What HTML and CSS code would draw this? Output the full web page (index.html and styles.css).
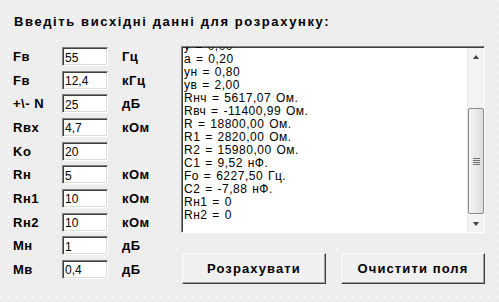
FILE: index.html
```html
<!DOCTYPE html>
<html lang="uk">
  <head>
    <meta charset="UTF-8" />
    <title>Розрахунок фільтра</title>
    <link rel="stylesheet" href="styles.css">
  </head>
  <body>
    <div class="form">
      <h1 class="title">Введіть висхідні данні для розрахунку:</h1>
      <div class="main">
        <div class="fields">
          <label>Fв</label><input class="edit" value="55" /><span>Гц</span>
          <label>Fв</label><input class="edit" value="12,4" /><span>кГц</span>
          <label>+\- N</label><input class="edit" value="25" /><span>дБ</span>
          <label>Rвх</label><input class="edit" value="4,7" /><span>кОм</span>
          <label>Ko</label><input class="edit" value="20" /><span></span>
          <label>Rн</label><input class="edit" value="5" /><span>кОм</span>
          <label>Rн1</label><input class="edit" value="10" /><span>кОм</span>
          <label>Rн2</label><input class="edit" value="10" /><span>кОм</span>
          <label>Mн</label><input class="edit" value="1" /><span>дБ</span>
          <label>Mв</label><input class="edit" value="0,4" /><span>дБ</span>
        </div>
        <div class="right">
          <div class="memo">
            <div class="lines">
              <p>y = 0,00</p>
              <p>a = 0,20</p>
              <p>ун = 0,80</p>
              <p>ув = 2,00</p>
              <p>Rнч = 5617,07 Ом.</p>
              <p>Rвч = -11400,99 Ом.</p>
              <p>R = 18800,00 Ом.</p>
              <p>R1 = 2820,00 Ом.</p>
              <p>R2 = 15980,00 Ом.</p>
              <p>C1 = 9,52 нФ.</p>
              <p>Fo = 6227,50 Гц.</p>
              <p>C2 = -7,88 нФ.</p>
              <p>Rн1 = 0</p>
              <p>Rн2 = 0</p>
            </div>
            <div class="scroll">
              <div class="arrow up"></div>
              <div class="track">
                <div class="thumb"><i></i></div>
              </div>
              <div class="arrow down"></div>
            </div>
          </div>
          <div class="buttons">
            <button class="btn">Розрахувати</button>
            <button class="btn">Очистити поля</button>
          </div>
        </div>
      </div>
    </div>
  </body>
</html>
```

FILE: styles.css
```css
* {
  margin: 0;
  padding: 0;
  box-sizing: border-box;
}
body {
  width: 499px;
  height: 302px;
  overflow: hidden;
  background-color: #ededed;
  background-image: radial-gradient(circle at 1px 1px, #f7f7f7 0.7px, transparent 0.9px);
  background-size: 8px 8px;
  font-family: "Liberation Sans", Arial, sans-serif;
  color: #000;
}

.form {
  padding: 14px 0 0 13px;
}

.title {
  font-size: 13px;
  line-height: 16px;
  font-weight: bold;
  letter-spacing: 1.6px;
  margin-left: 1px;
}

.main {
  display: flex;
  margin-top: 16px;
}

.fields {
  width: 168px;
  display: grid;
  grid-template-columns: 49px 46px auto;
  grid-auto-rows: 19px;
  row-gap: 4.67px;
  margin-top: 1px;
  align-items: center;
}
.fields label,
.fields span {
  font-size: 13px;
  font-weight: bold;
  letter-spacing: 0.5px;
}
.fields span {
  padding-left: 14px;
}

.edit {
  width: 46px;
  height: 19px;
  border: 1px solid;
  border-color: #808080 #fff #fff #808080;
  box-shadow: inset 1px 1px 0 #404040, inset -1px -1px 0 #dcdcdc;
  background: #fff;
  font-family: "Liberation Sans", Arial, sans-serif;
  font-size: 12px;
  padding: 2px 0 0 2px;
  outline: none;
}

.right {
  display: flex;
  flex-direction: column;
}

.memo {
  width: 304px;
  height: 187px;
  display: flex;
  border: 1px solid;
  border-color: #808080 #fff #fff #808080;
  box-shadow: inset 1px 1px 0 #404040;
  background: #fff;
}
.lines {
  flex: 1;
  overflow: hidden;
  padding: 1px 0 0 2px;
}
.lines p {
  font-size: 12px;
  line-height: 13px;
  letter-spacing: 0.5px;
  word-spacing: 1px;
}
.lines p:first-child {
  margin-top: -8px;
}

.scroll {
  width: 17px;
  margin-top: 1px;
  display: flex;
  flex-direction: column;
  background: #f3f3f3;
  border-left: 1px solid #e6e6e6;
}
.arrow {
  height: 17px;
  position: relative;
}
.arrow::after {
  content: "";
  position: absolute;
  left: 5px;
  border-left: 3px solid transparent;
  border-right: 3px solid transparent;
}
.arrow.up::after {
  top: 7px;
  border-bottom: 4px solid #404040;
}
.arrow.down::after {
  top: 7px;
  border-top: 4px solid #404040;
}
.track {
  flex: 1;
  padding-top: 43px;
  padding-bottom: 1px;
  display: flex;
}
.thumb {
  flex: 1;
  border: 1px solid #8a8a8a;
  border-radius: 2px;
  background: linear-gradient(to right, #f6f6f6, #dcdcdc);
  display: flex;
  align-items: center;
  justify-content: center;
}
.thumb i {
  width: 7px;
  height: 7px;
  background: repeating-linear-gradient(to bottom, #707070 0 1px, transparent 1px 2px);
}

.buttons {
  display: flex;
  gap: 15px;
  margin-top: 20px;
  padding-left: 1px;
}
.btn {
  width: 144px;
  height: 31px;
  background: #f0f0f0;
  border: 1px solid;
  border-color: #fff #404040 #404040 #fff;
  box-shadow: inset -1px -1px 0 #a0a0a0;
  font-family: "Liberation Sans", Arial, sans-serif;
  font-size: 13px;
  font-weight: bold;
  letter-spacing: 1.1px;
  color: #000;
}
```
